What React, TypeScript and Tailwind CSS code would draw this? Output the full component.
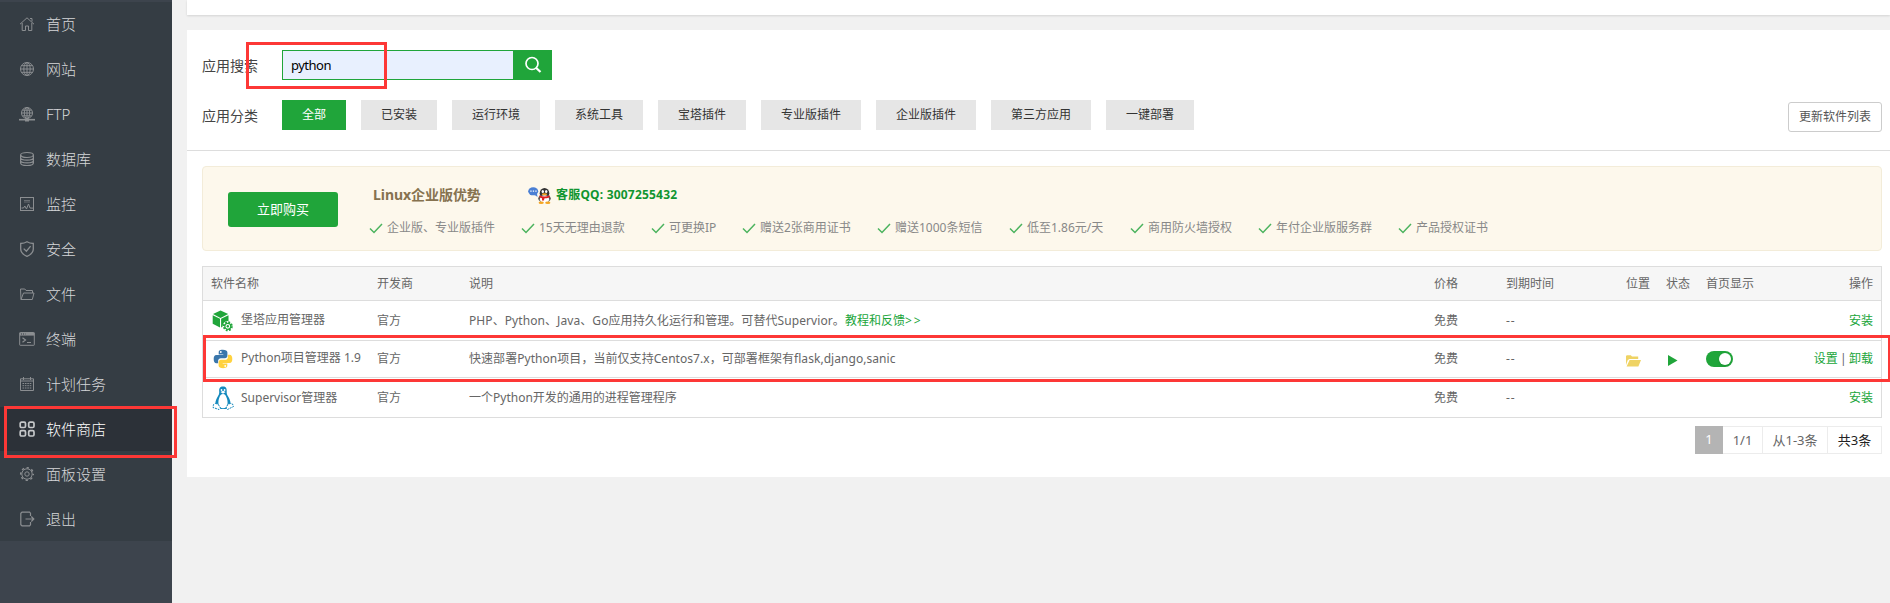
import React from "react";

const stroke = { fill: "none", stroke: "currentColor", strokeWidth: 1 } as const;

const icons: Record<string, React.ReactNode> = {
  home: (
    <g {...stroke}>
      <path d="M1 8.2 8 1.8l7 6.4M3.2 7v7.5h3.3V10h3v4.5h3.3V7M11 2.5h2v3" />
    </g>
  ),
  globe: (
    <g {...stroke}>
      <circle cx="8" cy="8" r="6.5" />
      <ellipse cx="8" cy="8" rx="3.2" ry="6.5" />
      <path d="M8 1.5v13M1.5 8h13M2.5 4.7h11M2.5 11.3h11" />
    </g>
  ),
  ftp: (
    <g {...stroke}>
      <circle cx="8" cy="7" r="5.5" />
      <ellipse cx="8" cy="7" rx="2.7" ry="5.5" />
      <path d="M8 1.5v12M2.5 7h11M3.5 4.2h9M3.5 9.8h9" />
      <path d="M0 13.7h16" strokeWidth="1.6" />
      <path d="M6 14h4" strokeWidth="3" />
    </g>
  ),
  database: (
    <g {...stroke} strokeWidth={1.2}>
      <ellipse cx="8" cy="4" rx="6.4" ry="2.5" />
      <path d="M1.6 4v8c0 3.3 12.8 3.3 12.8 0V4M1.6 6.8c0 3.2 12.8 3.2 12.8 0M1.6 9.5c0 3.2 12.8 3.2 12.8 0" />
    </g>
  ),
  monitor: (
    <g {...stroke}>
      <rect x="1.5" y="1.5" width="13" height="13" />
      <path d="M5 4.5h6M5 6h6" opacity=".6" />
      <path d="M2.5 12h2l1.3-2 1.7 3 2-5 1.5 4 1 .1h2" />
    </g>
  ),
  shield: (
    <g {...stroke} strokeWidth={1.3}>
      <path d="M8 .8c2 1.3 4.300 1.700 6.300 1.700V8c0 3.300-2.500 5.700-6.300 7.400C4.200 13.700 1.700 11.300 1.700 8V2.500C3.700 2.500 6 2.100 8 .8Z" />
      <path d="m4.700 7.600 2.700 2.600 4.200-5" />
    </g>
  ),
  folder: (
    <g {...stroke}>
      <path d="M2 13.500 1.500 3h4.300L7 4.500h6.500V7M2 13.500h11.300L15 7H4.500L2 13.500Z" />
    </g>
  ),
  terminal: (
    <g {...stroke}>
      <rect x=".7" y="1.500" width="14.600" height="12.800" rx=".5" />
      <path d="M.7 3.200h14.600" strokeWidth="2.800" />
      <path d="M2 3h4.500" stroke="#353d44" strokeDasharray="1 1" />
      <path d="m3.500 6.800 3 2.200-3 2.200M8 11.500h4" strokeWidth="1.200" />
    </g>
  ),
  calendar: (
    <g {...stroke}>
      <path d="M1.500 2.800h13v11.700h-13zM4.500 1v3M11.500 1v3M1.500 5h13" />
      <path d="M3.500 7.500h9M3.500 9.700h9M3.500 12h9" strokeDasharray="1.600 .8" />
    </g>
  ),
  apps: (
    <g {...stroke} strokeWidth={1.700}>
      <rect x="1.200" y="1.200" width="5.300" height="5.300" rx="1.300" />
      <rect x="9.700" y="1.200" width="5.300" height="5.300" rx="1.300" />
      <rect x="1.200" y="9.700" width="5.300" height="5.300" rx="1.300" />
      <rect x="9.700" y="9.700" width="5.300" height="5.300" rx="1.300" />
    </g>
  ),
  gear: (
    <g {...stroke}>
      <circle cx="8" cy="8" r="5.200" />
      <circle cx="8" cy="8" r="6.300" strokeWidth="1.500" strokeDasharray="2.300 2.648" strokeDashoffset="1.150" />
      <circle cx="8" cy="8" r="2.200" />
    </g>
  ),
  exit: (
    <g {...stroke} strokeWidth={1.200}>
      <path d="M11.500 5V2.200L10.500 1.200H3L1.800 2.200v11.600L3 14.800h7.500l1-1V11M6.500 8h8M12.300 5.500 14.800 8l-2.500 2.500" />
    </g>
  ),
};

const menu = [
  ["home", "首页"],
  ["globe", "网站"],
  ["ftp", "FTP"],
  ["database", "数据库"],
  ["monitor", "监控"],
  ["shield", "安全"],
  ["folder", "文件"],
  ["terminal", "终端"],
  ["calendar", "计划任务"],
  ["apps", "软件商店"],
  ["gear", "面板设置"],
  ["exit", "退出"],
];

function Sidebar() {
  return (
    <aside className="h-full w-[172px] shrink-0 bg-[#3d444d] pt-[2px]">
      <nav className="bg-[#353d44]">
        {menu.map(([icon, label]) => {
          const active = icon === "apps";
          return (
            <a
              key={icon}
              className={
                active
                  ? "mb-px flex h-11 items-center bg-[#2c3138] pl-[19px] text-[15px] text-white"
                  : "mb-px flex h-11 items-center pl-[19px] text-[15px] text-[#d5d7d9]"
              }
            >
              <svg
                viewBox="0 0 16 16"
                className={active ? "mr-[11px] size-4 text-[#c5c7c9]" : "mr-[11px] size-4 text-[#8b8e91]"}
              >
                {icons[icon]}
              </svg>
              <span className="font-light">{label}</span>
            </a>
          );
        })}
      </nav>
    </aside>
  );
}

const categories = [
  ["全部", "w-16 bg-[#20a53a] text-white"],
  ["已安装", "w-[76px] bg-[#e6e6e6]"],
  ["运行环境", "w-[88px] bg-[#e6e6e6]"],
  ["系统工具", "w-[88px] bg-[#e6e6e6]"],
  ["宝塔插件", "w-[88px] bg-[#e6e6e6]"],
  ["专业版插件", "w-[100px] bg-[#e6e6e6]"],
  ["企业版插件", "w-[100px] bg-[#e6e6e6]"],
  ["第三方应用", "w-[100px] bg-[#e6e6e6]"],
  ["一键部署", "w-[88px] bg-[#e6e6e6]"],
];

function Filters() {
  return (
    <div className="h-[121px] border-b border-[#ddd] pt-5 pl-[15px] pr-2">
      <div className="flex h-[30px]">
        <span className="w-20 pt-[6px] text-sm leading-5 text-[#444]">应用搜索</span>
        <input
          defaultValue="python"
          className="h-[30px] w-[231px] border border-r-0 border-[#20a53a] bg-[#e8f0fe] pl-[8px] text-[13px] tracking-[-0.5px] text-black outline-none"
        />
        <button className="flex h-[30px] w-[39px] items-center justify-center bg-[#20a53a] text-white">
          <svg viewBox="0 0 18 18" className="size-[18px]" fill="none" stroke="currentColor" strokeWidth="1.700">
            <circle cx="8" cy="7.500" r="6" />
            <path d="m12 11.800 4.500 4.200" strokeWidth="2.200" />
          </svg>
        </button>
      </div>
      <div className="mt-5 flex h-8">
        <span className="w-20 pt-[6px] text-sm leading-5 text-[#444]">应用分类</span>
        <div className="flex gap-[15px] text-xs text-[#333]">
          {categories.map(([label, look]) => (
            <button key={label} className={`flex h-[30px] items-center justify-center ${look}`}>
              {label}
            </button>
          ))}
        </div>
        <button className="mt-[2px] ml-auto h-[30px] w-[94px] rounded-[3px] border border-[#ccc] text-xs text-[#555]">
          更新软件列表
        </button>
      </div>
    </div>
  );
}

const perks = [
  ["企业版、专业版插件", "w-[152px]"],
  ["15天无理由退款", "w-[130px]"],
  ["可更换IP", "w-[91px]"],
  ["赠送2张商用证书", "w-[135px]"],
  ["赠送1000条短信", "w-[132px]"],
  ["低至1.86元/天", "w-[121px]"],
  ["商用防火墙授权", "w-[128px]"],
  ["年付企业版服务群", "w-[140px]"],
  ["产品授权证书", "w-[120px]"],
];

function QQIcon() {
  return (
    <svg viewBox="0 0 24 17" className="mr-[4px] h-[17px] w-6">
      <ellipse cx="5.200" cy="4.300" rx="5" ry="4" fill="#4a7fd4" />
      <path d="m6 7.500 3.500 2.500-.5-3.500Z" fill="#4a7fd4" />
      <path d="M2.300 4.200h6.500" stroke="#fff" strokeWidth="1.200" strokeDasharray="1.300 1.200" />
      <ellipse cx="16.500" cy="6.200" rx="4.800" ry="5.300" fill="#333" />
      <ellipse cx="16.500" cy="11.500" rx="6.300" ry="4" fill="#555" />
      <ellipse cx="16.500" cy="12.200" rx="4.600" ry="3.900" fill="#fff" />
      <ellipse cx="14.800" cy="4.500" rx="1.200" ry="1.500" fill="#fff" />
      <ellipse cx="18.200" cy="4.500" rx="1.200" ry="1.500" fill="#fff" />
      <ellipse cx="16.500" cy="7.200" rx="2.700" ry="1" fill="#f5a623" />
      <path d="M11.500 8.300c3 1.600 7 1.600 10 0l.3 1.700c-2 1.200-4 1.400-5.500 1.400l-.3 2.200h-2V11.200c-1-.3-1.800-.6-2.600-1Z" fill="#e02020" />
      <ellipse cx="13.200" cy="15.700" rx="2.600" ry="1.200" fill="#f5a623" />
      <ellipse cx="19.800" cy="15.700" rx="2.600" ry="1.200" fill="#f5a623" />
    </svg>
  );
}

function Banner() {
  return (
    <section className="flex h-[85px] rounded border border-[#f3ecd9] bg-[#fdf8ec] pl-[25px]">
      <button className="mt-[25px] h-[35px] w-[110px] shrink-0 rounded-[3px] bg-[#20a53a] text-[13px] text-white">
        立即购买
      </button>
      <div className="ml-[31px] pt-[17px]">
        <div className="flex h-[22px] items-center">
          <b className="ml-[4px] w-[155px] text-sm tracking-[-0.05px] text-[#86724f]">Linux企业版优势</b>
          <QQIcon />
          <b className="text-xs tracking-[0.2px] text-[#109530]">客服QQ: 3007255432</b>
        </div>
        <ul className="mt-[12px] flex h-5 items-center text-xs text-[#888]">
          {perks.map(([label, width]) => (
            <li key={label} className={`flex items-center whitespace-nowrap ${width}`}>
              <svg viewBox="0 0 14 12" className="mr-[4px] h-3 w-[14px]" fill="none" stroke="#4bb35e" strokeWidth="1.500">
                <path d="m1 6.500 4 4 8-8.500" />
              </svg>
              {label}
            </li>
          ))}
        </ul>
      </div>
    </section>
  );
}

function CubeIcon() {
  return (
    <svg viewBox="0 0 22 22" className="size-[22px]">
      <path d="m8.500.5 7.700 3.600-7.700 3.800L1 4.100Z" fill="#20a53a" />
      <path d="M.7 5.200 8 8.800v8.700L.7 13.700ZM16.500 5.200 9.100 8.800v8.700l7.400-3.800Z" fill="#20a53a" />
      <circle cx="15.800" cy="16.300" r="5.200" fill="#fff" />
      <circle cx="15.800" cy="16.300" r="4" fill="none" stroke="#20a53a" strokeWidth="2" strokeDasharray="1.800 1.340" />
      <circle cx="15.800" cy="16.300" r="3" fill="none" stroke="#20a53a" strokeWidth="1.200" />
      <circle cx="15.800" cy="16.300" r="1.200" fill="#20a53a" />
    </svg>
  );
}

function PythonIcon() {
  return (
    <svg viewBox="0 0 22 22" className="size-[22px]">
      <path
        d="M10.900 1.800c-4 0-4.200 1.500-4.200 2.600v2h4.600V7H4.500C2.300 7 1.700 9 1.700 11c0 2.500.8 4.300 2.600 4.300h1.800v-2.200c0-1.700 1.200-2.900 2.900-2.900h4c1.400 0 2.400-1.100 2.400-2.400V4.400c0-1.800-1.900-2.600-4.500-2.600Z"
        fill="#3a76ab"
      />
      <path
        d="M11.100 20.200c4 0 4.200-1.500 4.200-2.600v-2h-4.600V15h6.800c2.200 0 2.800-2 2.800-4 0-2.500-.8-4.300-2.600-4.300h-1.800v2.200c0 1.700-1.200 2.900-2.900 2.900H9c-1.400 0-2.400 1.100-2.400 2.400v3.400c0 1.800 1.900 2.600 4.500 2.600Z"
        fill="#ffd23f"
      />
      <circle cx="8.800" cy="4" r=".9" fill="#fff" />
      <circle cx="13.200" cy="18" r=".9" fill="#fff" />
    </svg>
  );
}

function TuxIcon() {
  return (
    <svg viewBox="0 0 22 24" className="h-6 w-[22px]">
      <path d="M11 .5C8 .5 7 2.500 7.200 5c.3 3-.5 4-2 6.500C3.700 14 3 17 3.500 19l5 4h6l4-4c.5-2-.6-5.500-2-8-1.500-2.500-2-3-1.800-6C14.900 2.500 14 .5 11 .5Z" fill="#1389bd" />
      <path d="M11 8c-2 0-3 1.500-3.800 4C6 15 6 20.500 8.500 21.800c1.500.7 4 .7 5.500-.3 2-1.500 2-6.500.7-9.500C13.800 9.500 13 8 11 8Z" fill="#fff" />
      <path d="m8.500 6 2.500-1.300L13.600 6 11 7.700Z" fill="#fff" />
      <circle cx="9.500" cy="4" r=".9" fill="#fff" />
      <circle cx="12.600" cy="4" r=".9" fill="#fff" />
      <path
        d="M3.500 17.500 6 18l2.500 4-1.500 1.500-6-2 .5-3ZM18.500 17.500 16 18l-2 4 1.500 1.500 6-3-1-2.500Z"
        fill="#fff"
        stroke="#1389bd"
        strokeWidth="1"
        strokeDasharray="2 .9"
      />
    </svg>
  );
}

const grid =
  "grid grid-cols-[166px_92px_965px_72px_120px_40px_40px_60px_1fr] items-center pl-[8px] pr-[8px] whitespace-nowrap";

function Link({ children }: { children: React.ReactNode }) {
  return <a className="text-[#20a53a]">{children}</a>;
}

function Table() {
  return (
    <div className="mt-[15px] h-[152px] border border-[#ddd] text-xs text-[#666]">
      <div className={`${grid} h-[34px] border-b border-[#ddd] bg-[#f6f6f6]`}>
        <span>软件名称</span>
        <span>开发商</span>
        <span>说明</span>
        <span>价格</span>
        <span>到期时间</span>
        <span>位置</span>
        <span>状态</span>
        <span>首页显示</span>
        <span className="text-right">操作</span>
      </div>
      <div className={`${grid} h-10 border-b border-[#ddd] pt-px`}>
        <span className="flex items-center gap-[7px] pl-px">
          <CubeIcon />
          <span className="-mt-[3px]">堡塔应用管理器</span>
        </span>
        <span>官方</span>
        <span>
          <span className="tracking-[0.08px]">PHP、Python、Java、Go应用持久化运行和管理。可替代Supervior。</span>
          <Link>
            教程和反馈<span className="tracking-[2px]">&gt;&gt;</span>
          </Link>
        </span>
        <span>免费</span>
        <span className="tracking-[1px]">--</span>
        <span />
        <span />
        <span />
        <span className="text-right">
          <Link>安装</Link>
        </span>
      </div>
      <div className={`${grid} h-[37px] border-b border-[#ddd]`}>
        <span className="flex items-center gap-[7px] pl-px">
          <PythonIcon />
          <span className="-mt-[2px]">Python项目管理器 1.9</span>
        </span>
        <span>官方</span>
        <span className="tracking-[0.05px]">
          快速部署Python项目，当前仅支持Centos7.x，可部署框架有flask,django,sanic
        </span>
        <span>免费</span>
        <span className="tracking-[1px]">--</span>
        <span>
          <svg viewBox="0 0 15 12" className="mt-[3px] h-3 w-[15px]" fill="#efd364">
            <path d="M0 10V1l.8-.8h4L6 1.500h6.200V4H3.500L1.800 5Z" />
            <path d="M3.600 5H15l-2.600 6.500H.6Z" />
          </svg>
        </span>
        <span>
          <svg viewBox="0 0 10 11" className="mt-[3px] ml-[2px] h-[11px] w-[10px]" fill="#20a53a">
            <path d="M0 0v11l9.500-5.500Z" />
          </svg>
        </span>
        <span className="flex h-4 w-[27px] items-center justify-end rounded-full bg-[#20a53a] pr-[2px]">
          <i className="size-3 rounded-full bg-white shadow-sm" />
        </span>
        <span className="text-right [word-spacing:-0.8px]">
          <Link>设置</Link> | <Link>卸载</Link>
        </span>
      </div>
      <div className={`${grid} h-[39px]`}>
        <span className="flex items-center gap-[7px] pl-px">
          <TuxIcon />
          <span>Supervisor管理器</span>
        </span>
        <span>官方</span>
        <span>一个Python开发的通用的进程管理程序</span>
        <span>免费</span>
        <span className="tracking-[1px]">--</span>
        <span />
        <span />
        <span />
        <span className="text-right">
          <Link>安装</Link>
        </span>
      </div>
    </div>
  );
}

function Pagination() {
  return (
    <div className="mt-2 flex h-7 justify-end text-[13px] text-[#666]">
      <span className="flex w-7 items-center justify-center bg-[#b4b4b4] text-white">1</span>
      <span className="flex w-10 items-center justify-center border border-l-0 border-[#ececec] pt-px">1/1</span>
      <span className="flex w-[65px] items-center justify-center border border-l-0 border-[#ececec] pt-px">从1-3条</span>
      <span className="flex w-[54px] items-center justify-center border border-l-0 border-[#ececec] pt-px text-[#222]">
        共3条
      </span>
    </div>
  );
}

export default function App() {
  return (
    <div className="relative flex h-[603px] w-[1890px] overflow-hidden bg-[#f1f1f1] font-['Noto_Sans','Noto_Sans_CJK_SC',sans-serif]">
      <Sidebar />
      <main className="ml-[15px] flex-1">
        <div className="h-[15px] bg-white shadow-[0_1px_2px_rgba(0,0,0,0.12)]" />
        <div className="mt-[15px] h-[447px] bg-white">
          <Filters />
          <div className="pt-[15px] pr-[8px] pl-[15px]">
            <Banner />
            <Table />
            <Pagination />
          </div>
        </div>
      </main>
      <div className="absolute top-[406px] left-[4px] h-[52px] w-[173px] border-3 border-[#fd3836]" />
      <div className="absolute top-[42px] left-[246px] h-[47px] w-[141px] border-3 border-[#fd3836]" />
      <div className="absolute top-[335px] left-[203px] h-[47px] w-[1688px] border-3 border-[#fd3836]" />
    </div>
  );
}
